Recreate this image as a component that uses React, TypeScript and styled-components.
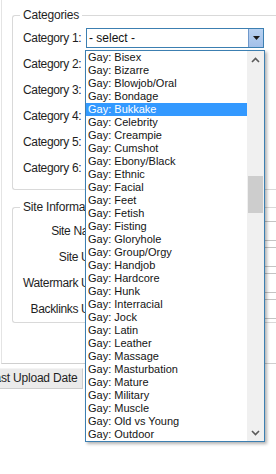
import React from 'react';
import styled, { createGlobalStyle } from 'styled-components';

const GlobalStyle = createGlobalStyle`
  html, body { margin: 0; padding: 0; background: #ffffff; }
  body { font-family: "Liberation Sans", Arial, sans-serif; color: #1b1b1b; }
`;

const Page = styled.div`
  position: relative;
  width: 276px;
  height: 474px;
  overflow: hidden;
  background: #ffffff;
`;

const Panel = styled.div`
  box-sizing: border-box;
  width: 420px;
  height: 364px;
  margin-left: 1px;
  padding: 15px 0 0 10px;
  border-left: 1px solid #e4e4e4;
  border-bottom: 1px solid #cfcfcf;
  display: flex;
  flex-direction: column;
  gap: 17px;
`;

const Group = styled.div<{ $padBottom: number }>`
  border: 1px solid #d9d9d9;
  border-right: none;
  border-radius: 3px 0 0 3px;
  padding: 0 0 ${p => p.$padBottom}px 10px;
  display: flex;
  flex-direction: column;
`;

const Legend = styled.div`
  align-self: flex-start;
  margin: -8px 0 0 -3px;
  padding: 0 3px;
  background: #ffffff;
  font-size: 12px;
  line-height: 14px;
  color: #1e1e1e;
  letter-spacing: -0.2px;
`;

const Rows = styled.div<{ $top: number }>`
  display: flex;
  flex-direction: column;
  margin-top: ${p => p.$top}px;
`;

const Row = styled.div`
  height: 26px;
  display: flex;
  align-items: center;
`;

const Label = styled.div<{ $width: number; $right?: boolean }>`
  width: ${p => p.$width}px;
  flex: none;
  font-size: 12px;
  letter-spacing: -0.35px;
  color: #1e1e1e;
  text-align: ${p => (p.$right ? 'right' : 'left')};
  white-space: nowrap;
`;

const SelectBox = styled.div<{ $focused?: boolean }>`
  box-sizing: border-box;
  width: 178px;
  height: 20px;
  border: 1px solid ${p => (p.$focused ? '#3c7fb1' : '#adadad')};
  background: #ffffff;
  display: flex;
  align-items: stretch;
`;

const SelectText = styled.div`
  flex: 1;
  padding-left: 2px;
  font-size: 12px;
  line-height: 18px;
  color: #111;
`;

const DropButton = styled.div`
  width: 14px;
  flex: none;
  background: linear-gradient(#b9d2f1, #a3c0e9);
  border-left: 1px solid #6f98cb;
  display: flex;
  align-items: center;
  justify-content: center;
`;

const TextInput = styled.div`
  box-sizing: border-box;
  width: 320px;
  height: 20px;
  margin-left: 8px;
  border: 1px solid #c4c4c4;
  background: #fff;
`;

const HeaderRow = styled.div`
  display: flex;
  margin-top: 4px;
`;

const HeaderCell = styled.div`
  box-sizing: border-box;
  width: 104px;
  height: 21px;
  margin-left: -21px;
  padding-left: 8px;
  background: #ebebeb;
  border: 1px solid #cdcdcd;
  border-top-color: #f4f4f4;
  font-size: 12px;
  line-height: 19px;
  letter-spacing: -0.2px;
  color: #1e1e1e;
  white-space: nowrap;
`;

const Dropdown = styled.div`
  position: absolute;
  left: 85px;
  top: 50px;
  box-sizing: border-box;
  width: 180px;
  height: 392px;
  border: 1px solid #3c7fb1;
  background: #ffffff;
  box-shadow: 2px 2px 3px rgba(0, 0, 0, 0.3);
  display: flex;
`;

const Items = styled.div`
  flex: 1;
  display: flex;
  flex-direction: column;
`;

const Item = styled.div<{ $selected?: boolean }>`
  height: 13px;
  line-height: 13px;
  padding-left: 2px;
  font-size: 11px;
  white-space: nowrap;
  overflow: hidden;
  background: ${p => (p.$selected ? '#3399ff' : 'transparent')};
  color: ${p => (p.$selected ? '#ffffff' : '#141414')};
`;

const Scrollbar = styled.div`
  width: 17px;
  flex: none;
  background: #f0f0f0;
  display: flex;
  flex-direction: column;
`;

const ScrollButton = styled.div`
  height: 17px;
  flex: none;
  display: flex;
  align-items: center;
  justify-content: center;
`;

const Track = styled.div`
  flex: 1;
  display: flex;
  flex-direction: column;
`;

const Thumb = styled.div<{ $offset: number; $size: number }>`
  margin: ${p => p.$offset}px 1px 0 1px;
  height: ${p => p.$size}px;
  background: #cdcdcd;
`;

const categories = [
  'Bisex', 'Bizarre', 'Blowjob/Oral', 'Bondage', 'Bukkake', 'Celebrity', 'Creampie',
  'Cumshot', 'Ebony/Black', 'Ethnic', 'Facial', 'Feet', 'Fetish', 'Fisting', 'Gloryhole',
  'Group/Orgy', 'Handjob', 'Hardcore', 'Hunk', 'Interracial', 'Jock', 'Latin', 'Leather',
  'Massage', 'Masturbation', 'Mature', 'Military', 'Muscle', 'Old vs Young', 'Outdoor',
];

const siteFields = ['Site Name:', 'Site URL:', 'Watermark URL:', 'Backlinks URL:'];

const Chevron = ({ up }: { up?: boolean }) => (
  <svg width="9" height="6" viewBox="0 0 9 6">
    <path
      d={up ? 'M1 5 L4.5 1.5 L8 5' : 'M1 1 L4.5 4.5 L8 1'}
      fill="none"
      stroke="#5a5a5a"
      strokeWidth="1.6"
    />
  </svg>
);

export default function App() {
  return (
    <Page>
      <GlobalStyle />
      <Panel>
        <Group $padBottom={8}>
          <Legend>Categories</Legend>
          <Rows $top={3}>
            {[1, 2, 3, 4, 5, 6].map(n => (
              <Row key={n}>
                <Label $width={63}>Category {n}:</Label>
                <SelectBox $focused={n === 1}>
                  <SelectText>- select -</SelectText>
                  <DropButton>
                    <svg width="7" height="4" viewBox="0 0 7 4">
                      <path d="M0 0 H7 L3.5 4 Z" fill="#1a1a1a" />
                    </svg>
                  </DropButton>
                </SelectBox>
              </Row>
            ))}
          </Rows>
        </Group>
        <Group $padBottom={0}>
          <Legend>Site Information</Legend>
          <Rows $top={4}>
            {siteFields.map(f => (
              <Row key={f}>
                <Label $width={84} $right>{f}</Label>
                <TextInput />
              </Row>
            ))}
          </Rows>
        </Group>
      </Panel>
      <HeaderRow>
        <HeaderCell>Last Upload Date</HeaderCell>
      </HeaderRow>
      <Dropdown>
        <Items>
          {categories.map((c, i) => (
            <Item key={c} $selected={i === 4}>Gay: {c}</Item>
          ))}
        </Items>
        <Scrollbar>
          <ScrollButton><Chevron up /></ScrollButton>
          <Track>
            <Thumb $offset={108} $size={37} />
          </Track>
          <ScrollButton><Chevron /></ScrollButton>
        </Scrollbar>
      </Dropdown>
    </Page>
  );
}
